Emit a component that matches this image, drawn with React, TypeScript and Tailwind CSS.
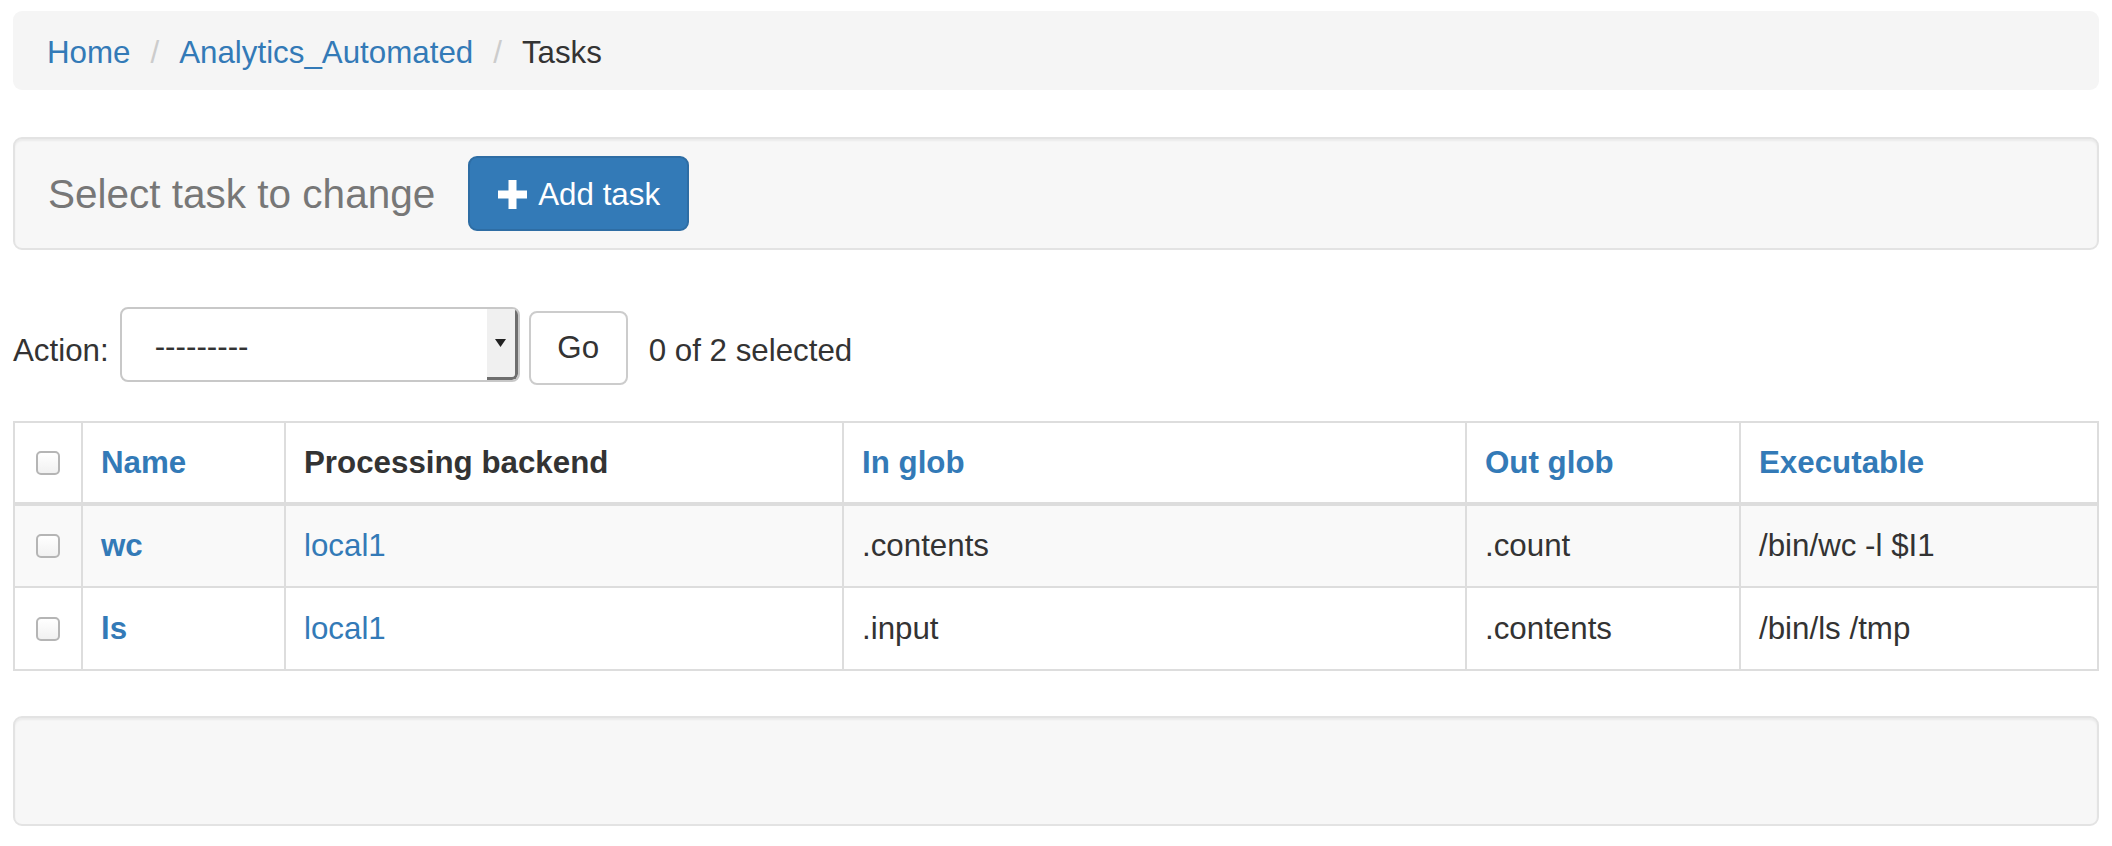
import React from 'react'

interface TaskRow {
  name: string
  backend: string
  inGlob: string
  outGlob: string
  executable: string
}

const rows: TaskRow[] = [
  { name: 'wc', backend: 'local1', inGlob: '.contents', outGlob: '.count', executable: '/bin/wc -l $I1' },
  { name: 'ls', backend: 'local1', inGlob: '.input', outGlob: '.contents', executable: '/bin/ls /tmp' },
]

const columns = [
  { label: 'Name', link: true, width: 'w-[203px]' },
  { label: 'Processing backend', link: false, width: 'w-[558px]' },
  { label: 'In glob', link: true, width: 'w-[623px]' },
  { label: 'Out glob', link: true, width: 'w-[274px]' },
  { label: 'Executable', link: true, width: '' },
]

function Checkbox() {
  return (
    <span className="mx-auto block h-[24px] w-[24px] rounded-[5px] border-2 border-[#b5b5b5] bg-gradient-to-b from-white to-[#f1f1f1]" />
  )
}

function PlusIcon() {
  return (
    <svg width="29" height="29" viewBox="0 0 29 29" className="shrink-0">
      <rect x="10.5" y="0" width="8" height="29" fill="white" />
      <rect x="0" y="10.5" width="29" height="8" fill="white" />
    </svg>
  )
}

export default function App() {
  return (
    <div
      className="min-h-[846px] bg-white px-[13px] pt-[11px] text-[31.3px] text-[#333]"
      style={{ fontFamily: '"Liberation Sans", Arial, sans-serif' }}
    >
      {/* breadcrumb */}
      <div className="flex h-[79px] items-center rounded-[9px] bg-[#f5f5f5] px-[34px] pt-[5px] leading-none">
        <a className="text-[#337ab7]">Home</a>
        <span className="px-[20px] text-[#ccc]">/</span>
        <a className="text-[#337ab7]">Analytics_Automated</a>
        <span className="px-[20px] text-[#ccc]">/</span>
        <span className="text-[#333]">Tasks</span>
      </div>

      {/* header well */}
      <div className="mt-[47px] flex h-[113px] items-center rounded-[9px] border-2 border-[#e3e3e3] bg-[#f7f7f7] pl-[33px] shadow-[inset_0_2px_2px_rgba(0,0,0,0.05)]">
        <h2 className="pt-[2px] text-[40.5px] font-normal leading-none text-[#777]">Select task to change</h2>
        <button className="ml-[33px] flex h-[75px] w-[221px] items-center gap-[11px] rounded-[9px] border-2 border-[#2e6da4] bg-[#337ab7] pl-[28px] pt-[2px] text-[31.3px] leading-none text-white">
          <PlusIcon />
          <span>Add task</span>
        </button>
      </div>

      {/* actions */}
      <div className="mt-[54px] flex items-center">
        <label className="pt-[12px] leading-none">Action:</label>
        <div className="ml-[11px] flex h-[75px] w-[400px] overflow-hidden rounded-[8px] border-2 border-[#c8c8c8] bg-white">
          <div className="flex flex-1 items-center pl-[33px] pt-[4px] leading-none text-[#333]">---------</div>
          <div className="flex w-[31px] items-center justify-center rounded-br-[6px] border-r-[3px] border-b-[3px] border-[#6e6e6e] bg-[#f0f0f0]">
            <svg width="11" height="8" viewBox="0 0 11 8">
              <polygon points="0,0 11,0 5.5,8" fill="#222" />
            </svg>
          </div>
        </div>
        <button className="ml-[9px] mt-[7px] flex h-[74px] w-[99px] items-center justify-center rounded-[8px] border-2 border-[#ccc] bg-white text-[31.3px] leading-none text-[#333]">
          Go
        </button>
        <span className="ml-[21px] pt-[12px] leading-none">0 of 2 selected</span>
      </div>

      {/* table */}
      <table className="mt-[36px] w-full table-fixed border-collapse border-2 border-[#ddd]">
        <thead>
          <tr className="h-[82px] border-b-[4px] border-[#ddd]">
            <th className="w-[68px] border-2 border-b-[4px] border-[#ddd] px-0 align-middle">
              <Checkbox />
            </th>
            {columns.map((c) => (
              <th
                key={c.label}
                className={`${c.width} border-2 border-b-[4px] border-[#ddd] px-[18px] text-left align-middle font-bold leading-none ${c.link ? 'text-[#337ab7]' : 'text-[#333]'}`}
              >
                {c.label}
              </th>
            ))}
          </tr>
        </thead>
        <tbody>
          {rows.map((r, i) => (
            <tr key={r.name} className={`h-[83px] ${i % 2 === 0 ? 'bg-[#f9f9f9]' : 'bg-white'}`}>
              <td className="border-2 border-[#ddd] px-0 align-middle">
                <Checkbox />
              </td>
              <th className="border-2 border-[#ddd] px-[18px] text-left align-middle font-bold leading-none text-[#337ab7]">
                {r.name}
              </th>
              <td className="border-2 border-[#ddd] px-[18px] align-middle leading-none text-[#337ab7]">{r.backend}</td>
              <td className="border-2 border-[#ddd] px-[18px] align-middle leading-none">{r.inGlob}</td>
              <td className="border-2 border-[#ddd] px-[18px] align-middle leading-none">{r.outGlob}</td>
              <td className="border-2 border-[#ddd] px-[18px] align-middle leading-none">{r.executable}</td>
            </tr>
          ))}
        </tbody>
      </table>

      {/* footer well */}
      <div className="mt-[45px] h-[110px] rounded-[9px] border-2 border-[#e3e3e3] bg-[#f7f7f7] shadow-[inset_0_2px_2px_rgba(0,0,0,0.05)]" />
    </div>
  )
}
